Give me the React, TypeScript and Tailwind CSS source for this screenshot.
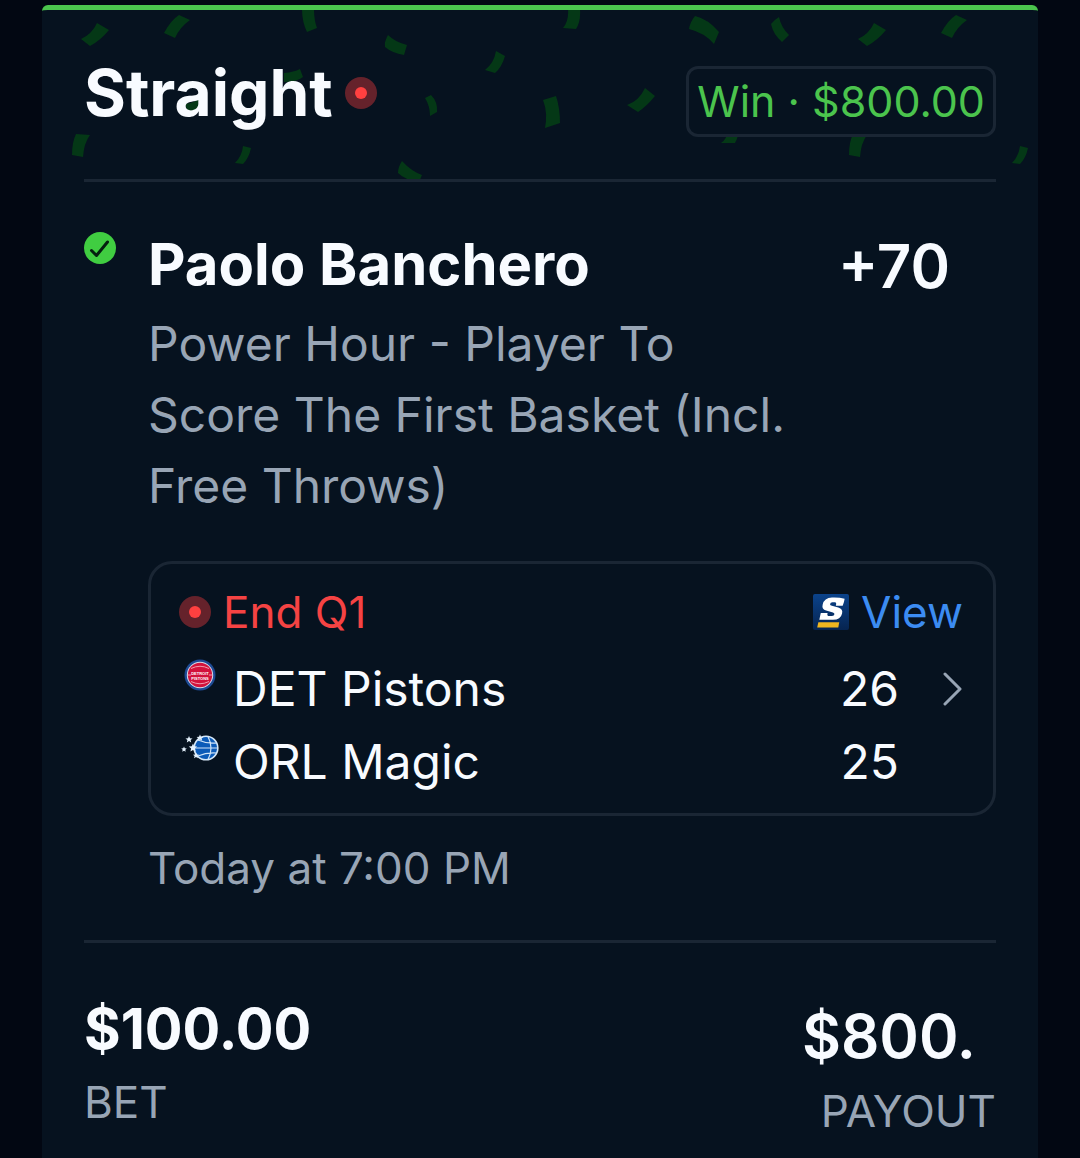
import React from "react";

const confetti = [
  "M81 39Q92 34 97 23L109 30Q101 40 90 46Z",
  "M164 33Q171 20 179 15L190 20Q180 27 175 38Z",
  "M302 9L314 9Q314 20 317 28L307 32Q302 22 302 9Z",
  "M388 35Q395 42 407 45L404 55Q392 53 385 47Q384 42 388 35Z",
  "M496 51L505 56Q502 67 495 73L485 70Q494 63 496 51Z",
  "M284 73Q294 72 300 69L303 77Q297 82 284 82Z",
  "M185 104Q194 103 200 98L204 104Q198 111 188 112Z",
  "M425 98L431 95Q438 102 437 112L430 116Q430 106 425 98Z",
  "M76 134L90 135Q84 143 83 157L72 155Q72 142 76 134Z",
  "M243 146L251 148Q249 158 243 164L235 163Q242 156 243 146Z",
  "M402 161Q411 171 422 175L419 182Q405 180 398 173Q398 167 402 161Z",
  "M568 9L580 9Q581 21 576 29L563 28Q569 21 568 9Z",
  "M695 16Q708 19 719 32L714 44Q705 33 689 29Q690 22 695 16Z",
  "M779 17Q781 27 789 35L782 42Q773 34 771 24Q774 20 779 17Z",
  "M858 39Q869 34 874 23L886 30Q878 40 867 46Z",
  "M941 33Q948 20 956 15L967 20Q957 27 952 38Z",
  "M645 88L655 96Q647 106 638 112L627 105Q639 101 645 88Z",
  "M543 100L556 96Q560 108 560 123L545 128Q548 113 543 100Z",
  "M728 130L739 130Q738 138 735 143L721 143Q727 139 728 130Z",
  "M853 134L867 135Q861 143 860 157L849 155Q849 142 853 134Z",
  "M1020 146L1028 148Q1026 158 1020 164L1012 163Q1019 156 1020 146Z",
];

const LiveDot = () => (
  <span className="flex size-8 shrink-0 items-center justify-center rounded-full bg-[#65222b]">
    <span className="size-3 rounded-full bg-[#ff4040]" />
  </span>
);

const CheckBadge = () => (
  <svg viewBox="0 0 32 32" className="size-8 shrink-0" aria-label="Won">
    <circle cx="16" cy="16" r="16" fill="#40cd41" />
    <path d="M7.5 18.500L12.500 23.500L23.500 10" fill="none" stroke="#04200f" strokeWidth="3" strokeLinecap="round" strokeLinejoin="round" />
  </svg>
);

const PistonsLogo = () => (
  <svg viewBox="0 0 32 32" className="size-8" aria-hidden="true">
    <circle cx="16" cy="16" r="15.500" fill="#1d4a94" />
    <circle cx="16" cy="16" r="13.200" fill="#d5dbe8" />
    <circle cx="16" cy="16" r="12.200" fill="#d2123c" />
    <path d="M7 9.500Q16 5 25 9.500M7 22.500Q16 27 25 22.500M4 16H7M25 16H28" fill="none" stroke="#f3a9b8" strokeWidth="0.900" />
    <g fill="#fff" fontFamily="Liberation Sans, sans-serif" fontWeight="700" textAnchor="middle">
      <text x="16" y="15.500" fontSize="4">DETROIT</text>
      <text x="16" y="20.500" fontSize="4">PISTONS</text>
    </g>
  </svg>
);

const MagicLogo = () => (
  <svg viewBox="0 0 38 28" className="h-7 w-[38px]" aria-hidden="true">
    <circle cx="25" cy="14" r="11.800" fill="#0c5bb8" stroke="#d6e8f8" strokeWidth="1.600" />
    <path d="M13 14H37M17 6Q26 10 36 9M17 22Q26 18 36 19M27 2.500Q33 14 27 25.500" fill="none" stroke="#cfe4f7" strokeWidth="1.200" />
    <g fill="#e4f1fc">
      <path d="M8 2l1 2.200 2.500.2-1.900 1.600.6 2.400L8 7.100 5.800 8.400l.6-2.400L4.500 4.400 7 4.200z" />
      <path d="M3 12.500l.8 1.700 2 .2-1.500 1.300.4 2L3 16.700l-1.800 1 .5-2L.2 14.400l2-.2z" />
      <path d="M12 9.500l1.200 2.800 3 .2-2.300 2 .8 3-2.700-1.600-2.600 1.600.7-3-2.300-2 3-.2z" />
      <path d="M19 .5l1 2.200 2.400.2-1.800 1.600.6 2.300L19 5.600l-2.200 1.200.6-2.300-1.800-1.600 2.400-.2z" />
      <path d="M15 18.500l.9 2 2.200.2-1.700 1.400.5 2.200-1.900-1.200-2 1.200.6-2.200-1.700-1.400 2.200-.2z" />
    </g>
  </svg>
);

const ScoreLogo = () => (
  <svg viewBox="0 0 37 37" className="size-9" aria-hidden="true">
    <defs>
      <linearGradient id="score-bg" x1="0" y1="0" x2="0" y2="1">
        <stop offset="0" stopColor="#0b438b" />
        <stop offset="1" stopColor="#062450" />
      </linearGradient>
    </defs>
    <rect width="37" height="37" rx="2" fill="url(#score-bg)" />
    <path
      d="M32.500 5Q32 9 30.500 12H23.500Q24.500 8.600 22.500 8.600H20Q17.800 8.800 17.500 10.500Q17.500 11.600 19.500 12.200L26 14Q31 15.500 29.900 20Q28.500 26.500 20.500 26.500H6.500L8 19.500H15Q14 22.700 16.500 22.700H19.500Q21.800 22.500 22 20.800Q22.200 19.500 20.500 19L13.500 17Q8.800 15.500 9.900 11Q11.500 4 19.500 3.700Q27 3.400 32.500 5Z"
      fill="#fff"
    />
    <path d="M5.500 29H27L26 34.500H4.300Z" fill="#eeb520" />
  </svg>
);

const teams = [
  { name: "DET Pistons", score: 26, logo: <PistonsLogo /> },
  { name: "ORL Magic", score: 25, logo: <MagicLogo /> },
];

export default function App() {
  return (
    <div className="min-h-screen bg-[#020712] px-[42px] pt-[5px] font-['Inter',sans-serif] text-[#f8fbff] [font-optical-sizing:none]">
      <main className="relative flex min-h-[calc(100vh-5px)] flex-col overflow-hidden rounded-t-md border-t-[5px] border-[#4bc44d] bg-[#06121f] px-[42px]">
        <svg
          viewBox="42 10 996 172"
          className="pointer-events-none absolute left-0 top-0 h-[172px] w-[996px]"
          fill="#043816"
          aria-hidden="true"
        >
          {confetti.map((d) => (
            <path key={d} d={d} />
          ))}
        </svg>

        <header className="relative flex h-[172px] items-start justify-between border-b-[3px] border-[#1a2634] pt-[43px]">
          <div className="flex items-center gap-3">
            <h1 className="text-[64px] font-bold leading-[80px]">Straight</h1>
            <LiveDot />
          </div>
          <div className="mt-[13px] rounded-xl border-[3px] border-[#1a2634] bg-[#06121f] px-2 text-[43px] leading-[65px] text-[#4bc44d]">
            Win · $800.00
          </div>
        </header>

        <section className="flex items-start gap-8 border-b-[3px] border-[#1a2634] pb-10 pt-[47px]">
          <div className="pt-[3px]">
            <CheckBadge />
          </div>
          <div className="min-w-0 flex-1">
            <div className="flex items-start justify-between pr-[46px]">
              <h2 className="text-[58px] font-bold leading-[70px]">Paolo Banchero</h2>
              <span className="mt-0.5 text-[60px] font-semibold leading-[70px]">+70</span>
            </div>
            <p className="mt-[7px] max-w-[660px] text-[48px] leading-[71px] text-[#98a5b5]">
              Power Hour - Player To Score The First Basket (Incl. Free Throws)
            </p>

            <div className="mt-10 rounded-3xl border-[3px] border-[#1a2634] pb-[15px] pl-7 pr-[30px] pt-4">
              <div className="flex items-center justify-between text-[44px] leading-[64px]">
                <div className="flex items-center gap-3 text-[#f54343]">
                  <LiveDot />
                  <span>End Q1</span>
                </div>
                <a href="#view" className="flex items-center gap-3 text-[#3c8cf2]">
                  <ScoreLogo />
                  View
                </a>
              </div>
              <div className="mt-2 flex items-start">
                <ul className="flex-1">
                  {teams.map((team) => (
                    <li key={team.name} className="flex items-start text-[48px] leading-[73px]">
                      <span className="mr-3 mt-[7px] flex h-8 w-[42px] items-center justify-center">{team.logo}</span>
                      <span className="flex-1">{team.name}</span>
                      <span>{team.score}</span>
                    </li>
                  ))}
                </ul>
                <button type="button" aria-label="Open game" className="ml-11 flex h-[73px] items-center">
                  <svg viewBox="0 0 20 36" className="h-9 w-5" fill="none" stroke="#98a5b5" strokeWidth="3" strokeLinecap="round" strokeLinejoin="round">
                    <path d="M2 3L17 18L2 33" />
                  </svg>
                </button>
              </div>
            </div>

            <p className="mt-5 text-[44px] leading-[64px] text-[#98a5b5]">Today at 7:00 PM</p>
          </div>
        </section>

        <footer className="flex items-start justify-between pt-[51px]">
          <div>
            <div className="text-[56px] font-bold leading-[70px]">$100.00</div>
            <div className="mt-1.5 text-[44px] leading-[64px] text-[#98a5b5]">BET</div>
          </div>
          <div className="pt-[7px] text-right">
            <div className="pr-5 text-[60px] font-semibold leading-[70px]">$800.</div>
            <div className="mt-2 text-[44px] leading-[64px] text-[#98a5b5]">PAYOUT</div>
          </div>
        </footer>
      </main>
    </div>
  );
}
